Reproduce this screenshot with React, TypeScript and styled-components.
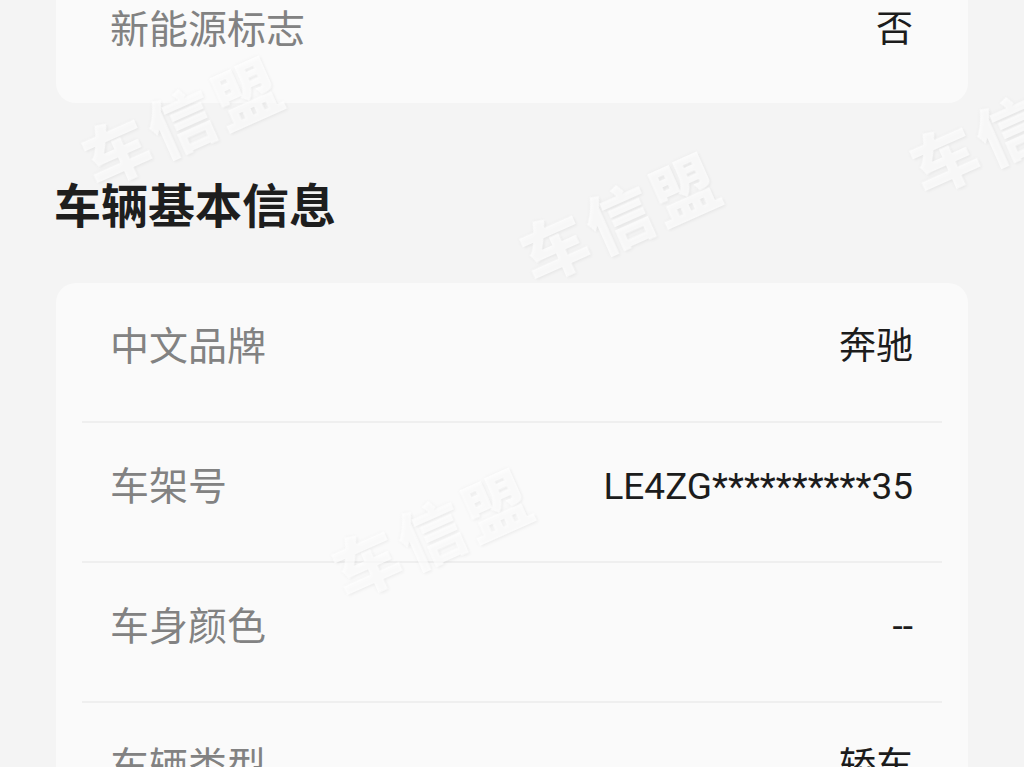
import React from "react";
import styled, { createGlobalStyle } from "styled-components";

const GlobalStyle = createGlobalStyle`
  html, body {
    margin: 0;
    padding: 0;
    background: #f4f4f4;
  }
  body {
    font-family: Roboto, "Noto Sans CJK SC", "Noto Sans", sans-serif;
    -webkit-font-smoothing: antialiased;
  }
`;

const Page = styled.div`
  position: relative;
  width: 1024px;
  height: 767px;
  overflow: hidden;
  box-sizing: border-box;
  padding: 0 56px;
  background: #f4f4f4;
`;

const Card = styled.section<{ $clippedTop?: boolean }>`
  background: #fafafa;
  border-radius: ${(p) => (p.$clippedTop ? "0 0 20px 20px" : "20px")};
  overflow: hidden;
`;

const SectionTitle = styled.h2`
  margin: 76px 0 48px -2px;
  font-size: 47px;
  line-height: 56px;
  font-weight: 700;
  color: #1e1e1e;
  letter-spacing: 0;
`;

const Row = styled.div<{ $clippedTop?: boolean; $last?: boolean }>`
  display: flex;
  justify-content: space-between;
  align-items: flex-start;
  box-sizing: border-box;
  height: ${(p) => (p.$clippedTop ? "103px" : "140px")};
  margin: 0 26px;
  padding: ${(p) => (p.$clippedTop ? "8px" : "42px")} 29px 0 28px;
  border-bottom: ${(p) => (p.$last ? "none" : "2px solid #efefef")};
`;

const Label = styled.span`
  font-size: 39px;
  line-height: 44px;
  color: #828282;
`;

const Value = styled.span`
  font-size: 37px;
  line-height: 44px;
  color: #1c1c1c;
`;

const Watermark = styled.span<{ $x: number; $y: number }>`
  position: absolute;
  left: ${(p) => p.$x}px;
  top: ${(p) => p.$y}px;
  transform: translate(-50%, -50%) rotate(-24deg);
  font-family: "Noto Sans CJK SC", sans-serif;
  font-size: 66px;
  font-weight: 900;
  letter-spacing: 5px;
  color: rgba(255, 255, 255, 0.7);
  text-shadow: 0 0 4px rgba(0, 0, 0, 0.04), 1px 2px 3px rgba(0, 0, 0, 0.04);
  filter: blur(0.7px);
  white-space: nowrap;
  pointer-events: none;
  user-select: none;
`;

type Item = { label: string; value: string };

const basicInfo: Item[] = [
  { label: "中文品牌", value: "奔驰" },
  { label: "车架号", value: "LE4ZG**********35" },
  { label: "车身颜色", value: "--" },
  { label: "车辆类型", value: "轿车" },
];

const marks = [
  { x: 182, y: 118 },
  { x: 620, y: 214 },
  { x: 1010, y: 126 },
  { x: 432, y: 530 },
];

export default function App() {
  return (
    <>
      <GlobalStyle />
      <Page>
        <Card $clippedTop>
          <Row $clippedTop $last>
            <Label>新能源标志</Label>
            <Value>否</Value>
          </Row>
        </Card>

        <SectionTitle>车辆基本信息</SectionTitle>

        <Card>
          {basicInfo.map((item, i) => (
            <Row key={item.label} $last={i === basicInfo.length - 1}>
              <Label>{item.label}</Label>
              <Value>{item.value}</Value>
            </Row>
          ))}
        </Card>

        {marks.map((m, i) => (
          <Watermark key={i} $x={m.x} $y={m.y}>
            车信盟
          </Watermark>
        ))}
      </Page>
    </>
  );
}
